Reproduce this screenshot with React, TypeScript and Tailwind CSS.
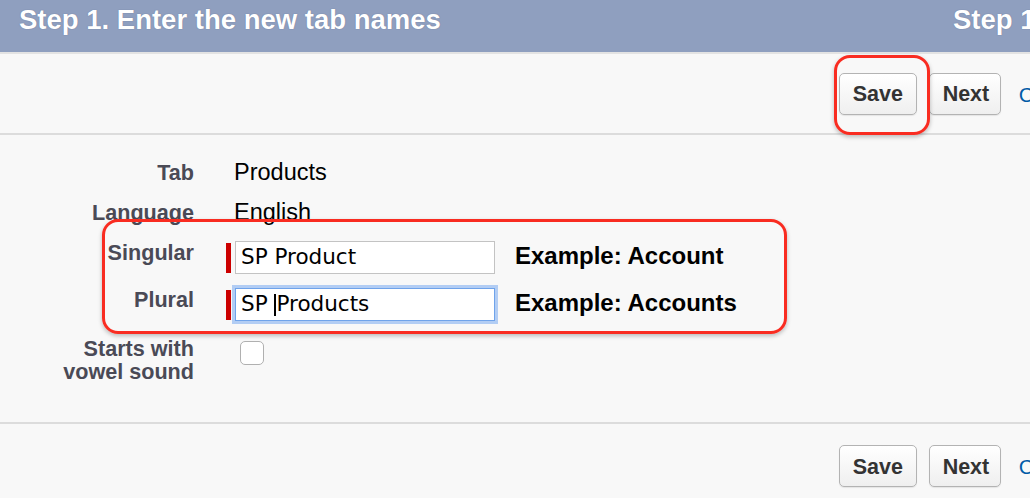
import React from "react";

const sans = { fontFamily: '"Liberation Sans", Arial, sans-serif' };

function Button({ children }: { children: React.ReactNode }) {
  return (
    <button
      type="button"
      className="h-[42px] rounded-[5px] border border-[#b3b3b3] bg-gradient-to-b from-white to-[#efefef] px-[13px] pt-[2px] text-[21.5px] font-bold text-[#333] shadow-[0_1px_1px_rgba(0,0,0,0.08)]"
    >
      {children}
    </button>
  );
}

function ButtonRow({ className }: { className: string }) {
  return (
    <div className={`flex items-center justify-end gap-[12px] pr-[26px] ${className}`}>
      <div className="w-[78px] flex">
        <Button>
          <span className="block w-[50px]">Save</span>
        </Button>
      </div>
      <Button>
        <span className="block w-[44px]">Next</span>
      </Button>
      <a className="ml-[6px] pt-[2px] text-[21px] text-[#015ba7]">Cancel</a>
    </div>
  );
}

function Label({ children }: { children: React.ReactNode }) {
  return (
    <div className="w-[194px] shrink-0 text-right text-[21.6px] font-bold leading-[24px] text-[#4a4a56]">
      {children}
    </div>
  );
}

export default function App() {
  return (
    <div className="h-[498px] w-[1030px] overflow-hidden bg-[#f8f8f8]" style={sans}>
      <div className="relative w-[1110px]">
        {/* header */}
        <div className="flex h-[52px] items-start justify-between bg-[#8f9fbf] pl-[19px] pr-[18px] pt-[4px] text-[27.5px] font-bold leading-[32px] text-white [text-shadow:0_0_1px_rgba(60,70,110,0.6)]">
          <span>Step 1. Enter the new tab names</span>
          <span>Step 1 of 2</span>
        </div>
        <div className="h-[2px] bg-[#e3e3e3]" />

        <ButtonRow className="h-[79px]" />
        <div className="h-[2px] bg-[#dcdcdc]" />

        {/* form */}
        <div className="h-[287px] pt-[18px]">
          <div className="flex h-[40px] items-center">
            <Label>Tab</Label>
            <div className="ml-[40px] text-[23.5px] text-black">Products</div>
          </div>
          <div className="flex h-[40px] items-center">
            <Label>Language</Label>
            <div className="ml-[40px] text-[23.5px] text-black">English</div>
          </div>

          <div className="mt-[8px] flex items-start">
            <Label>Singular</Label>
            <div className="ml-[32px] flex items-center">
              <div className="h-[30px] w-[5px] bg-[#c00]" />
              <div
                className="ml-[4px] flex h-[33px] w-[260px] items-center border border-[#c3c3c3] bg-white pl-[5px] text-[21.5px] text-black"
                style={{ fontFamily: '"DejaVu Sans", sans-serif' }}
              >
                SP Product
              </div>
              <div className="ml-[20px] -mt-[3px] text-[24px] font-bold text-black">Example: Account</div>
            </div>
          </div>

          <div className="mt-[14px] flex items-start">
            <Label>Plural</Label>
            <div className="ml-[32px] flex items-center">
              <div className="h-[30px] w-[5px] bg-[#c00]" />
              <div
                className="ml-[4px] flex h-[33px] w-[260px] items-center border border-[#6fa3ea] bg-white pl-[5px] text-[21.5px] text-black shadow-[0_0_0_3px_rgba(120,170,240,0.55)]"
                style={{ fontFamily: '"DejaVu Sans", sans-serif' }}
              >
                <span className="whitespace-pre">SP </span>
                <span className="h-[22px] w-[2px] bg-black" />
                <span>Products</span>
              </div>
              <div className="ml-[20px] -mt-[3px] text-[24px] font-bold text-black">Example: Accounts</div>
            </div>
          </div>

          <div className="mt-[16px] flex items-start">
            <div className="w-[194px] shrink-0 text-right text-[21.6px] font-bold leading-[23px] text-[#4a4a56]">
              Starts with
              <br />
              vowel sound
            </div>
            <div className="ml-[46px] mt-[4px] h-[24px] w-[24px] rounded-[5px] border border-[#b0b0b0] bg-white" />
          </div>
        </div>
        <div className="h-[2px] bg-[#dcdcdc]" />

        <ButtonRow className="h-[84px]" />

        {/* red annotation marks */}
        <div className="absolute left-[834px] top-[55px] h-[80px] w-[96px] rounded-[16px] border-[3px] border-[#f92c21] shadow-[0_2px_4px_rgba(0,0,0,0.25)]" />
        <div className="absolute left-[102px] top-[219px] h-[115px] w-[685px] rounded-[16px] border-[3px] border-[#f92c21] shadow-[0_2px_4px_rgba(0,0,0,0.25)]" />
      </div>
    </div>
  );
}
